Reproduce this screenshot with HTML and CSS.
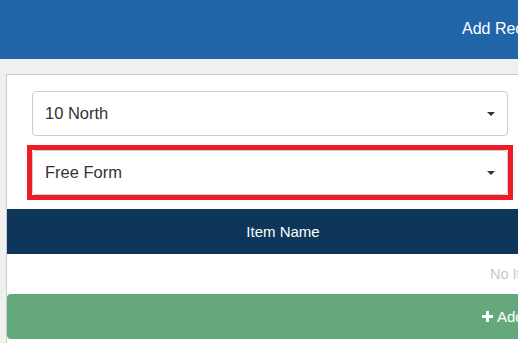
FILE: index.html
```html
<!DOCTYPE html>
<html>
<head>
<meta charset="utf-8">
<link rel="stylesheet" href="styles.css">
</head>
<body>
<div class="page">
  <header class="topbar">
    <span class="title">Add Record</span>
  </header>
  <main class="card">
    <div class="field">
      <div class="select">
        <span class="select-text">10 North</span>
        <span class="caret"></span>
      </div>
    </div>
    <div class="field highlight-field">
      <div class="highlight">
        <div class="select">
          <span class="select-text">Free Form</span>
          <span class="caret"></span>
        </div>
      </div>
    </div>
    <div class="table">
      <div class="thead">
        <div class="th">Item Name</div>
      </div>
      <div class="empty-row">No Items Found</div>
    </div>
    <button class="add-btn">
      <svg class="plus" width="11" height="11" viewBox="0 0 11 11"><path d="M4 0h3v4h4v3H7v4H4V7H0V4h4z" fill="#fff"/></svg>
      <span>Add Item</span>
    </button>
  </main>
</div>
</body>
</html>
```

FILE: styles.css
```css
html, body {
  margin: 0;
  padding: 0;
  background: #f0f0f0;
  overflow: hidden;
}
.page {
  width: 518px;
  height: 343px;
  overflow: hidden;
  font-family: "Liberation Sans", Arial, sans-serif;
}
.topbar {
  width: 1100px;
  height: 59px;
  background: #2165a9;
  display: flex;
  align-items: center;
  padding-left: 462px;
  box-sizing: border-box;
}
.title {
  color: #fff;
  font-size: 16px;
  margin-top: -2px;
}
.card {
  margin: 15px 0 0 6px;
  background: #fff;
  border: 1px solid #cccccc;
  width: 1080px;
  height: 400px;
  padding-top: 16px;
  box-sizing: border-box;
}
.field {
  padding-left: 25px;
  margin-bottom: 14px;
}
.highlight-field {
  padding-left: 20px;
  margin-top: -5px;
  margin-bottom: 9px;
}
.highlight {
  display: inline-block;
  border: 5px solid #ed1c24;
  vertical-align: top;
}
.select {
  width: 476px;
  height: 45px;
  box-sizing: border-box;
  border: 1px solid #cccccc;
  border-radius: 4px;
  display: flex;
  align-items: center;
  justify-content: space-between;
  padding: 0 12px 0 12px;
  background: #fff;
}
.select-text {
  font-size: 16.5px;
  color: #333;
}
.caret {
  width: 0;
  height: 0;
  border-left: 4px solid transparent;
  border-right: 4px solid transparent;
  border-top: 4px solid #333;
}
.thead {
  height: 45px;
  background: #0d365a;
  display: flex;
  align-items: center;
}
.th {
  width: 552px;
  text-align: center;
  color: #fff;
  font-size: 15px;
}
.empty-row {
  height: 40px;
  display: flex;
  align-items: center;
  padding-left: 483px;
  color: #c8c8c8;
  font-size: 14.5px;
  white-space: nowrap;
}
.add-btn {
  width: 1000px;
  height: 45px;
  border: 0;
  border-radius: 4px;
  background: #65a97b;
  color: #fff;
  font-family: "Liberation Sans", Arial, sans-serif;
  font-size: 15px;
  display: flex;
  align-items: center;
  padding: 0 0 0 475px;
  margin: 0;
  gap: 4px;
  white-space: nowrap;
}
.plus {
  display: block;
}
```
